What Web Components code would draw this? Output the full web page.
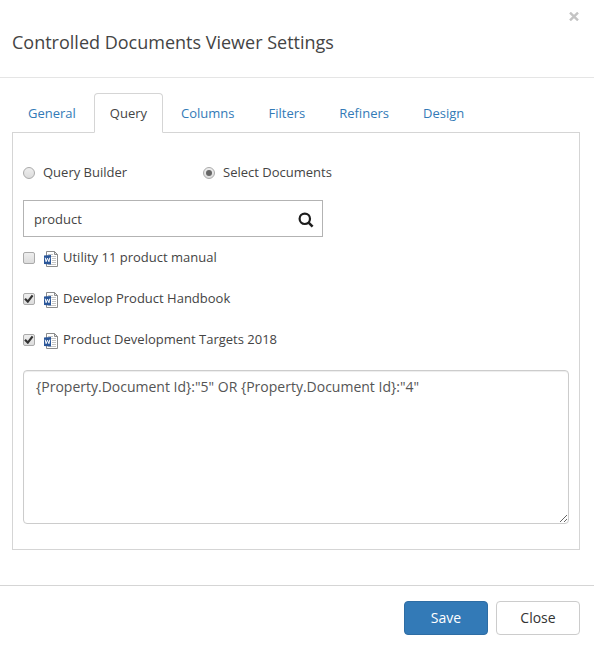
<!DOCTYPE html>
<html lang="en">
<head>
<meta charset="utf-8">
<meta name="viewport" content="width=device-width, initial-scale=1">
<title>Controlled Documents Viewer Settings</title>
<style>
  body { margin: 0; background: #fff; color: #444; font: 13px/20px "Open Sans", sans-serif; }
</style>
</head>
<body>
<settings-dialog heading="Controlled Documents Viewer Settings">
  <tab-strip>
    <tab-item>General</tab-item>
    <tab-item selected>Query</tab-item>
    <tab-item>Columns</tab-item>
    <tab-item>Filters</tab-item>
    <tab-item>Refiners</tab-item>
    <tab-item>Design</tab-item>
  </tab-strip>
  <query-panel></query-panel>
  <action-button slot="actions" primary>Save</action-button>
  <action-button slot="actions">Close</action-button>
</settings-dialog>

<script>
const define = (name, html, setup) => {
  const template = document.createElement('template');
  template.innerHTML = `<style>*, *::before { box-sizing: border-box; } button, input, textarea { font: inherit; color: inherit; }</style>${html}`;
  customElements.define(name, class extends HTMLElement {
    connectedCallback() {
      if (this.shadowRoot) return;
      this.attachShadow({ mode: 'open' }).append(template.content.cloneNode(true));
      if (setup) setup(this, this.shadowRoot);
    }
  });
};

define('settings-dialog', `
  <style>
    :host { display: block; }
    header { display: flex; flex-direction: column; padding: 8px 14px 22px 12px; border-bottom: 1px solid #e5e5e5; }
    .dismiss { align-self: flex-end; display: flex; padding: 4px 0; width: 12px; height: 17px; border: 0; background: none; color: #c4c4c4; justify-content: center; }
    h1 { margin: 5px 0 0; font-size: 18px; line-height: 25px; font-weight: 400; }
    main { padding: 15px 14px 35px 12px; }
    footer { display: flex; justify-content: flex-end; gap: 8px; padding: 15px 14px 14px; border-top: 1px solid #d5d5d5; }
  </style>
  <section role="dialog" aria-labelledby="title">
    <header>
      <button class="dismiss" aria-label="Dismiss"><svg width="10" height="9" viewBox="0 0 10 9"><path d="M1 .6 9 8.4M9 .6 1 8.4" stroke="currentColor" stroke-width="2.4"/></svg></button>
      <h1 id="title"></h1>
    </header>
    <main><slot></slot></main>
    <footer><slot name="actions"></slot></footer>
  </section>`,
  (host, root) => { root.querySelector('h1').textContent = host.getAttribute('heading'); });

define('tab-strip', `
  <style>
    :host { display: flex; gap: 2px; border-bottom: 1px solid #d5d5d5; }
  </style>
  <slot></slot>`,
  host => host.setAttribute('role', 'tablist'));

define('tab-item', `
  <style>
    :host { display: block; margin-bottom: -1px; }
    button { display: block; height: 40px; padding: 0 15px; border: 1px solid transparent; border-radius: 4px 4px 0 0; background: none; color: #337ab7; line-height: 20px; white-space: nowrap; }
    :host([selected]) button { border-color: #d5d5d5 #d5d5d5 #fff; background: #fff; color: #444; }
  </style>
  <button role="tab"><slot></slot></button>`,
  (host, root) => root.querySelector('button').setAttribute('aria-selected', host.hasAttribute('selected')));

define('choice-box', `
  <style>
    :host { display: block; }
    label { display: flex; align-items: center; }
    input { appearance: none; position: relative; flex: none; width: 12px; height: 12px; margin: 2px 8px 0 0; border: 1px solid #aaa; background: linear-gradient(#eee, #dcdcdc); }
    input[type=radio] { border-radius: 50%; }
    input[type=checkbox] { margin-right: 9px; border-radius: 2px; }
    input[type=radio]:checked::before { content: ""; position: absolute; inset: 2px; border-radius: 50%; background: #666; }
    svg { display: none; }
    .box { position: relative; display: flex; }
    input:checked[type=checkbox] + svg { display: block; position: absolute; left: 1px; top: 3px; pointer-events: none; }
    span { display: flex; align-items: center; }
  </style>
  <label><span class="box"><input><svg width="10" height="9" viewBox="0 0 10 9"><path d="m1 4.8 2.8 2.8L8.6 1.4" fill="none" stroke="#333" stroke-width="2.2"/></svg></span><span><slot></slot></span></label>`,
  (host, root) => {
    const input = root.querySelector('input');
    input.type = host.getAttribute('type');
    input.checked = host.hasAttribute('checked');
  });

define('word-icon', `
  <style>:host { display: block; margin: 3px 5px 0 0; } svg { display: block; }</style>
  <svg width="14" height="16" viewBox="0 0 14 16" aria-hidden="true">
    <path d="M2.5.5h8l3 3v12h-11z" fill="#fff" stroke="#8c8c8c"/>
    <path d="M10.5.5v3h3z" fill="#e8e8e8" stroke="#8c8c8c"/>
    <path d="M4 3.5h5M4 5.5h8M8 7.5h4M8 9.5h4M8 11.5h4M4 13.5h8" stroke="#c5c5c5"/>
    <path d="M0 4.5 7 4v9.5L0 13z" fill="#2a5699"/>
    <path d="m1.2 6.7.9 4 1.4-3.5 1.4 3.5.9-4" fill="none" stroke="#fff"/>
  </svg>`);

define('search-field', `
  <style>
    :host { display: flex; width: 300px; max-width: 100%; height: 37px; border: 1px solid #b3b3b3; }
    input { flex: 1; min-width: 0; padding: 0 10px; border: 0; outline: 0; background: none; }
    button { display: grid; place-items: center; width: 32px; padding: 2px 0 0; border: 0; background: none; color: #1d1d1d; }
  </style>
  <input type="text" aria-label="Search documents" value="product">
  <button aria-label="Search"><svg width="16" height="16" viewBox="0 0 16 16"><circle cx="6.8" cy="6.8" r="5.2" fill="none" stroke="currentColor" stroke-width="2.2"/><path d="m10.6 10.6 4 4" stroke="currentColor" stroke-width="2.6"/></svg></button>`);

define('query-panel', `
  <style>
    :host { display: block; padding: 29px 10px 25px; border: 1px solid #d5d5d5; border-top: 0; }
    .modes { display: grid; grid-template-columns: 180px auto; justify-content: start; margin-bottom: 18px; }
    .documents { display: grid; gap: 21px; margin: 10px 0 21px; }
    textarea { display: block; width: 100%; height: 154px; padding: 6px 12px; border: 1px solid #ccc; border-radius: 4px; box-shadow: inset 0 1px 1px #00000013; outline: 0; background: #fff; color: #555; font-size: 14px; line-height: 20px; resize: vertical; }
  </style>
  <div class="modes" role="radiogroup" aria-label="Query mode">
    <choice-box type="radio">Query Builder</choice-box>
    <choice-box type="radio" checked>Select Documents</choice-box>
  </div>
  <search-field></search-field>
  <div class="documents">
    <choice-box type="checkbox"><word-icon></word-icon>Utility 11 product manual</choice-box>
    <choice-box type="checkbox" checked><word-icon></word-icon>Develop Product Handbook</choice-box>
    <choice-box type="checkbox" checked><word-icon></word-icon>Product Development Targets 2018</choice-box>
  </div>
  <textarea aria-label="Query text">{Property.Document Id}:"5" OR {Property.Document Id}:"4"</textarea>`);

define('action-button', `
  <style>
    :host { display: block; }
    button { display: block; min-width: 84px; height: 34px; padding: 0 12px; border: 1px solid #ccc; border-radius: 4px; background: #fff; color: #333; font-size: 14px; line-height: 20px; }
    :host([primary]) button { border-color: #2e6da4; background: #337ab7; color: #fff; }
  </style>
  <button><slot></slot></button>`);
</script>
</body>
</html>
